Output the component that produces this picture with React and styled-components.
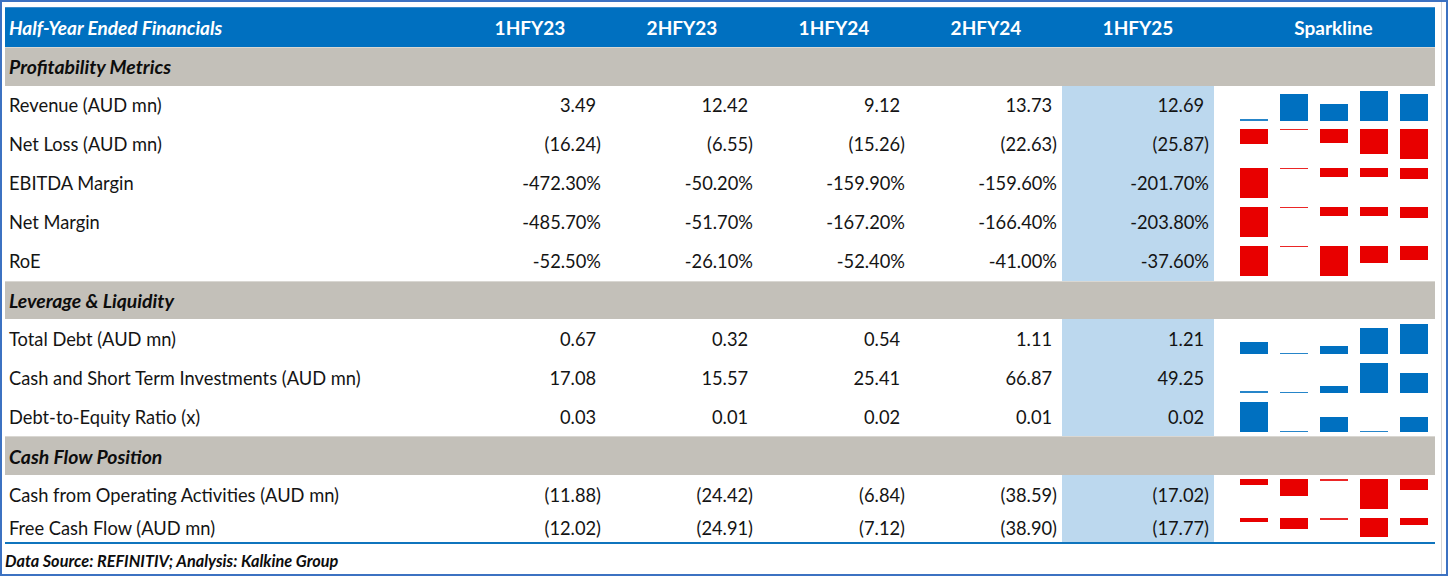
import React from 'react'
import styled, {createGlobalStyle} from 'styled-components'

const GlobalStyle = createGlobalStyle`
  html, body {margin: 0; padding: 0; background: #fff;}
  body {font-family: Lato, "Open Sans", sans-serif; color: #141414;}
`

const YEARS = ['1HFY23', '2HFY23', '1HFY24', '2HFY24', '1HFY25']

const SECTIONS = [
	{title: 'Profitability Metrics', rows: [
		{label: 'Revenue (AUD mn)', fmt: 'num', values: [3.49, 12.42, 9.12, 13.73, 12.69]},
		{label: 'Net Loss (AUD mn)', fmt: 'num', values: [-16.24, -6.55, -15.26, -22.63, -25.87]},
		{label: 'EBITDA Margin', fmt: 'pct', values: [-472.3, -50.2, -159.9, -159.6, -201.7]},
		{label: 'Net Margin', fmt: 'pct', values: [-485.7, -51.7, -167.2, -166.4, -203.8]},
		{label: 'RoE', fmt: 'pct', values: [-52.5, -26.1, -52.4, -41.0, -37.6]},
	]},
	{title: 'Leverage & Liquidity', rows: [
		{label: 'Total Debt (AUD mn)', fmt: 'num', values: [0.67, 0.32, 0.54, 1.11, 1.21]},
		{label: 'Cash and Short Term Investments (AUD mn)', fmt: 'num', values: [17.08, 15.57, 25.41, 66.87, 49.25]},
		{label: 'Debt-to-Equity Ratio (x)', fmt: 'num', values: [0.03, 0.01, 0.02, 0.01, 0.02]},
	]},
	{title: 'Cash Flow Position', rows: [
		{label: 'Cash from Operating Activities (AUD mn)', fmt: 'num', values: [-11.88, -24.42, -6.84, -38.59, -17.02]},
		{label: 'Free Cash Flow (AUD mn)', fmt: 'num', values: [-12.02, -24.91, -7.12, -38.9, -17.77], short: true},
	]},
]

const formatValue = (v, fmt) => {
	if (fmt === 'pct') return <>{v.toFixed(2)}%</>
	if (v < 0) return <>({Math.abs(v).toFixed(2)})</>
	return <>{v.toFixed(2)}<Hidden>)</Hidden></>
}

const Sparkline = ({values, rowHeight}) => {
	const negative = values.every(v => v <= 0)
	const maxH = rowHeight - 9
	const min = Math.min(...values)
	const max = Math.max(...values)
	const range = max - min || 1
	return (
		<Spark $negative={negative}>
			{values.map((v, i) => {
				const frac = negative ? (max - v) / range : (v - min) / range
				const h = 1.5 + frac * (maxH - 1.5)
				return <Bar key={i} $negative={negative} $thin={frac < 0.03} style={{height: `${h}px`}}/>
			})}
		</Spark>
	)
}

export default function App() {
	return (
		<>
			<GlobalStyle/>
			<Frame>
				<Table>
					<colgroup>
						<col style={{width: 449}}/>
						{YEARS.map(y => <col key={y} style={{width: 152}}/>)}
						<col style={{width: 221}}/>
					</colgroup>
					<thead>
						<tr>
							<HeadCell $left>Half-Year Ended Financials</HeadCell>
							{YEARS.map(y => <HeadCell key={y}>{y}</HeadCell>)}
							<HeadCell $spark>Sparkline</HeadCell>
						</tr>
					</thead>
					<tbody>
						{SECTIONS.map(section => (
							<React.Fragment key={section.title}>
								<tr>
									<SectionCell colSpan={7}>{section.title}</SectionCell>
								</tr>
								{section.rows.map(row => {
									const rh = row.short ? 28 : 39
									return (
										<DataRow key={row.label} $h={rh} $last={row.short}>
											<LabelCell>{row.label}</LabelCell>
											{row.values.map((v, i) => (
												<ValueCell key={i} $highlight={i === 4}>{formatValue(v, row.fmt)}</ValueCell>
											))}
											<SparkCell>
												<Sparkline values={row.values} rowHeight={rh}/>
											</SparkCell>
										</DataRow>
									)
								})}
							</React.Fragment>
						))}
					</tbody>
				</Table>
				<Footer>Data Source: REFINITIV; Analysis: Kalkine Group</Footer>
			</Frame>
		</>
	)
}

const Frame = styled.div`
  box-sizing: border-box;
  width: 1448px;
  height: 576px;
  border: 2px solid #3c72c2;
  padding: 5px 0 0 3px;
  box-shadow: inset -4px 0 0 #fff, inset -5px 0 0 #d6d6d6;
`

const Table = styled.table`
  width: 1430px;
  border-collapse: collapse;
  table-layout: fixed;
  font-size: 18.3px;
`

const HeadCell = styled.th`
  height: 40px;
  padding: 0 4px;
  padding-left: ${p => p.$spark ? '22px' : '4px'};
  background: #0070c0;
  color: #fff;
  font-size: 19px;
  font-weight: 700;
  font-style: ${p => p.$left ? 'italic' : 'normal'};
  text-align: ${p => p.$left ? 'left' : 'center'};
  box-shadow: inset 0 1px 0 #3d8dcc;
`

const SectionCell = styled.td`
  height: 37.7px;
  padding: 0 4px;
  background: #c3c0b9;
  font-size: 19.4px;
  font-weight: 700;
  font-style: italic;
  color: #0d0d0d;
  border-top: 1px solid #d9d7d2;
`

const DataRow = styled.tr`
  height: ${p => p.$h}px;
  & > td {
    border-bottom: ${p => p.$last ? '2px solid #0f74bd' : 'none'};
  }
`

const LabelCell = styled.td`
  padding: 0 4px;
  white-space: nowrap;
`

const ValueCell = styled.td`
  padding: 0 5px 0 0;
  text-align: right;
  white-space: nowrap;
  background: ${p => p.$highlight ? '#bcd8ee' : 'transparent'};
`

const Hidden = styled.span`
  visibility: hidden;
`

const SparkCell = styled.td`
  padding: 0;
  height: inherit;
`

const Spark = styled.div`
  display: flex;
  gap: 12px;
  height: 100%;
  box-sizing: border-box;
  padding: 4px 0 4px 26px;
  align-items: ${p => p.$negative ? 'flex-start' : 'flex-end'};
`

const Bar = styled.div`
  width: 28px;
  flex: none;
  background: ${p => p.$negative ? '#e80000' : '#0070c0'};
  opacity: ${p => p.$thin ? 0.85 : 1};
`

const Footer = styled.div`
  margin-top: 7px;
  font-size: 16.3px;
  line-height: 20px;
  font-weight: 700;
  font-style: italic;
  color: #0d0d0d;
`
